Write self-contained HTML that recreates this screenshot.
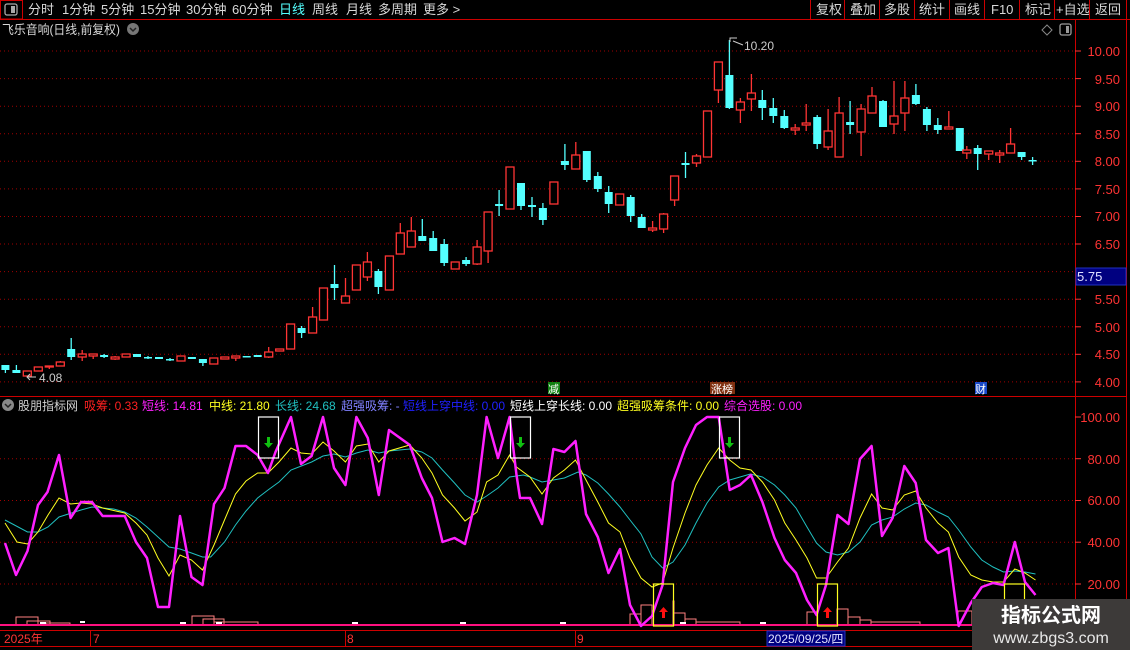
<!DOCTYPE html>
<html><head><meta charset="utf-8"><style>
html,body{margin:0;padding:0;background:#000;}
body{width:1130px;height:650px;overflow:hidden;position:relative;font-family:"Liberation Sans","Noto Sans CJK SC",sans-serif;}
svg{position:absolute;left:0;top:0}
.r{fill:#000;stroke:#ff3434;stroke-width:1.3}
.rl{stroke:#ff3434;stroke-width:1.3}
.c{fill:#54ffff}
.cl{stroke:#54ffff;stroke-width:1.3}
.g{stroke:#a00000;stroke-dasharray:1 3;stroke-width:1}
.ax{fill:#ff3434;font-size:13px;text-anchor:end}
.tb{fill:#d8d8d8;font-size:13px}
</style></head><body>
<svg width="1130" height="650" viewBox="0 0 1130 650" font-family="Liberation Sans, Noto Sans CJK SC, sans-serif">
<rect x="0.5" y="0.5" width="22" height="18.5" fill="none" stroke="#c00" />
<rect x="5" y="4" width="12" height="11" rx="2" fill="none" stroke="#aaa" stroke-width="1.3"/>
<rect x="11" y="6" width="4" height="7" fill="#aaa"/>
<line x1="0" y1="19.5" x2="1130" y2="19.5" stroke="#c00"/>
<g class="tb">
<text x="28" y="14">分时</text><text x="62" y="14">1分钟</text><text x="101" y="14">5分钟</text><text x="140" y="14">15分钟</text><text x="186" y="14">30分钟</text><text x="232" y="14">60分钟</text>
<text x="279" y="14" fill="#54ffff">日线</text><text x="312" y="14">周线</text><text x="346" y="14">月线</text><text x="378" y="14">多周期</text><text x="423" y="14">更多 &gt;</text>
</g>
<g stroke="#c00" fill="none">
<line x1="810.5" y1="0" x2="810.5" y2="19"/><line x1="844.5" y1="0" x2="844.5" y2="19"/><line x1="879.5" y1="0" x2="879.5" y2="19"/><line x1="914.5" y1="0" x2="914.5" y2="19"/><line x1="949.5" y1="0" x2="949.5" y2="19"/><line x1="984.5" y1="0" x2="984.5" y2="19"/><line x1="1019.5" y1="0" x2="1019.5" y2="19"/><line x1="1054.5" y1="0" x2="1054.5" y2="19"/><line x1="1089.5" y1="0" x2="1089.5" y2="19"/><line x1="1126.5" y1="0" x2="1126.5" y2="650"/>
</g>
<g class="tb">
<text x="816" y="14">复权</text><text x="850" y="14">叠加</text><text x="884" y="14">多股</text><text x="919" y="14">统计</text><text x="954" y="14">画线</text><text x="991" y="14">F10</text><text x="1025" y="14">标记</text><text x="1056" y="14">+自选</text><text x="1095" y="14">返回</text>
</g>
<text x="2" y="34" fill="#d8d8d8" font-size="12.5" textLength="118" lengthAdjust="spacingAndGlyphs">飞乐音响(日线,前复权)</text>
<circle cx="133" cy="29" r="6" fill="#777"/><path d="M130 28 L133 31 L136 28" stroke="#222" stroke-width="1.5" fill="none"/>
<path d="M1047 25 L1052 30 L1047 35 L1042 30 Z" fill="none" stroke="#888"/>
<rect x="1060" y="24" width="11" height="11" rx="2" fill="none" stroke="#999" stroke-width="1.3"/><rect x="1066" y="26" width="3" height="7" fill="#999"/>
<line x1="1075.5" y1="19" x2="1075.5" y2="630" stroke="#c00"/>
<line x1="0" y1="396.5" x2="1126" y2="396.5" stroke="#c00"/>
<line x1="0" y1="630.5" x2="1130" y2="630.5" stroke="#c00"/>
<line x1="0" y1="646.5" x2="1130" y2="646.5" stroke="#c00"/>
<g class="g">
<line x1="0" y1="51" x2="1073" y2="51"/><line x1="0" y1="78.6" x2="1073" y2="78.6"/><line x1="0" y1="106.2" x2="1073" y2="106.2"/><line x1="0" y1="133.7" x2="1073" y2="133.7"/><line x1="0" y1="161.3" x2="1073" y2="161.3"/><line x1="0" y1="188.9" x2="1073" y2="188.9"/><line x1="0" y1="216.5" x2="1073" y2="216.5"/><line x1="0" y1="244" x2="1073" y2="244"/><line x1="0" y1="271.6" x2="1073" y2="271.6"/><line x1="0" y1="299.2" x2="1073" y2="299.2"/><line x1="0" y1="326.8" x2="1073" y2="326.8"/><line x1="0" y1="354.3" x2="1073" y2="354.3"/><line x1="0" y1="381.9" x2="1073" y2="381.9"/>
<line x1="0" y1="458.7" x2="1073" y2="458.7"/><line x1="0" y1="500.5" x2="1073" y2="500.5"/><line x1="0" y1="542.2" x2="1073" y2="542.2"/><line x1="0" y1="584" x2="1073" y2="584"/>
</g>
<g stroke="#ff3434">
<line x1="1075" y1="51" x2="1081" y2="51"/><line x1="1075" y1="78.6" x2="1081" y2="78.6"/><line x1="1075" y1="106.2" x2="1081" y2="106.2"/><line x1="1075" y1="133.7" x2="1081" y2="133.7"/><line x1="1075" y1="161.3" x2="1081" y2="161.3"/><line x1="1075" y1="188.9" x2="1081" y2="188.9"/><line x1="1075" y1="216.5" x2="1081" y2="216.5"/><line x1="1075" y1="244" x2="1081" y2="244"/><line x1="1075" y1="299.2" x2="1081" y2="299.2"/><line x1="1075" y1="326.8" x2="1081" y2="326.8"/><line x1="1075" y1="354.3" x2="1081" y2="354.3"/><line x1="1075" y1="381.9" x2="1081" y2="381.9"/>
<line x1="1075" y1="417" x2="1081" y2="417"/><line x1="1075" y1="458.7" x2="1081" y2="458.7"/><line x1="1075" y1="500.5" x2="1081" y2="500.5"/><line x1="1075" y1="542.2" x2="1081" y2="542.2"/><line x1="1075" y1="584" x2="1081" y2="584"/>
</g>
<g class="ax">
<text x="1120" y="56">10.00</text><text x="1120" y="84">9.50</text><text x="1120" y="111">9.00</text><text x="1120" y="139">8.50</text><text x="1120" y="166">8.00</text><text x="1120" y="194">7.50</text><text x="1120" y="221">7.00</text><text x="1120" y="249">6.50</text><text x="1120" y="304">5.50</text><text x="1120" y="332">5.00</text><text x="1120" y="359">4.50</text><text x="1120" y="387">4.00</text>
<text x="1120" y="422">100.00</text><text x="1120" y="464">80.00</text><text x="1120" y="505">60.00</text><text x="1120" y="547">40.00</text><text x="1120" y="589">20.00</text>
</g>
<rect x="1076" y="268" width="50" height="17" fill="#000080" stroke="#2030c0"/>
<text x="1077" y="281" fill="#e0e0ff" font-size="13">5.75</text>
<g id="cd">
<line class="cl" x1="5.4" y1="365" x2="5.4" y2="373"/><rect class="c" x="1.4" y="365" width="8" height="5"/>
<line class="cl" x1="16.4" y1="365" x2="16.4" y2="373"/><rect class="c" x="12.4" y="370" width="8" height="3"/>
<rect class="r" x="23.3" y="371" width="8" height="5"/>
<rect class="r" x="34.3" y="367" width="8" height="4"/>
<line class="rl" x1="49.3" y1="366" x2="49.3" y2="369"/><rect class="r" x="45.3" y="366" width="8" height="1"/>
<line class="rl" x1="60.3" y1="361" x2="60.3" y2="366"/><rect class="r" x="56.3" y="362" width="8" height="4"/>
<line class="cl" x1="71.2" y1="338" x2="71.2" y2="360"/><rect class="c" x="67.2" y="349" width="8" height="8"/>
<line class="rl" x1="82.2" y1="350" x2="82.2" y2="361"/><rect class="r" x="78.2" y="354" width="8" height="3"/>
<line class="rl" x1="93.2" y1="354" x2="93.2" y2="359"/><rect class="r" x="89.2" y="354" width="8" height="2"/>
<line class="cl" x1="104.1" y1="354" x2="104.1" y2="358"/><rect class="c" x="100.1" y="355" width="8" height="2"/>
<line class="rl" x1="115.1" y1="356" x2="115.1" y2="360"/><rect class="r" x="111.1" y="357" width="8" height="2"/>
<rect class="r" x="122.1" y="354" width="8" height="3"/>
<rect class="c" x="133" y="354" width="8" height="3"/>
<line class="cl" x1="148" y1="356" x2="148" y2="359"/><rect class="c" x="144" y="357" width="8" height="1.5"/>
<rect class="c" x="155" y="357" width="8" height="2"/>
<line class="cl" x1="170" y1="358" x2="170" y2="361"/><rect class="c" x="166" y="359" width="8" height="1.5"/>
<rect class="r" x="177" y="356" width="8" height="5"/>
<rect class="c" x="187.9" y="357" width="8" height="2"/>
<line class="cl" x1="202.9" y1="359" x2="202.9" y2="366"/><rect class="c" x="198.9" y="359" width="8" height="4"/>
<rect class="r" x="209.8" y="358" width="8" height="6"/>
<rect class="r" x="220.8" y="357" width="8" height="2"/>
<line class="rl" x1="235.8" y1="356" x2="235.8" y2="361"/><rect class="r" x="231.8" y="356" width="8" height="2"/>
<rect class="c" x="242.7" y="356" width="8" height="1.5"/>
<rect class="c" x="253.7" y="355" width="8" height="2"/>
<line class="rl" x1="268.7" y1="347" x2="268.7" y2="358"/><rect class="r" x="264.7" y="352" width="8" height="5"/>
<rect class="r" x="275.7" y="349" width="8" height="2"/>
<rect class="r" x="286.6" y="324" width="8" height="25"/>
<line class="cl" x1="301.6" y1="326" x2="301.6" y2="338"/><rect class="c" x="297.6" y="328" width="8" height="5"/>
<line class="rl" x1="312.6" y1="307" x2="312.6" y2="333"/><rect class="r" x="308.6" y="317" width="8" height="16"/>
<rect class="r" x="319.5" y="288" width="8" height="32"/>
<line class="cl" x1="334.5" y1="265" x2="334.5" y2="300"/><rect class="c" x="330.5" y="284" width="8" height="4"/>
<line class="rl" x1="345.5" y1="278" x2="345.5" y2="303"/><rect class="r" x="341.5" y="296" width="8" height="7"/>
<rect class="r" x="352.4" y="265" width="8" height="25"/>
<line class="rl" x1="367.4" y1="252" x2="367.4" y2="281"/><rect class="r" x="363.4" y="262" width="8" height="15"/>
<line class="cl" x1="378.4" y1="269" x2="378.4" y2="294"/><rect class="c" x="374.4" y="271" width="8" height="16"/>
<rect class="r" x="385.4" y="256" width="8" height="34"/>
<line class="rl" x1="400.3" y1="223" x2="400.3" y2="254"/><rect class="r" x="396.3" y="233" width="8" height="21"/>
<line class="rl" x1="411.3" y1="217" x2="411.3" y2="247"/><rect class="r" x="407.3" y="231" width="8" height="16"/>
<line class="cl" x1="422.3" y1="219" x2="422.3" y2="241"/><rect class="c" x="418.3" y="236" width="8" height="5"/>
<line class="cl" x1="433.2" y1="231" x2="433.2" y2="251"/><rect class="c" x="429.2" y="238" width="8" height="13"/>
<line class="cl" x1="444.2" y1="239" x2="444.2" y2="266"/><rect class="c" x="440.2" y="244" width="8" height="19"/>
<rect class="r" x="451.2" y="262" width="8" height="7"/>
<line class="cl" x1="466.1" y1="257" x2="466.1" y2="266"/><rect class="c" x="462.1" y="260" width="8" height="4"/>
<line class="rl" x1="477.1" y1="240" x2="477.1" y2="265"/><rect class="r" x="473.1" y="247" width="8" height="17"/>
<line class="rl" x1="488.1" y1="212" x2="488.1" y2="263"/><rect class="r" x="484.1" y="212" width="8" height="39"/>
<line class="cl" x1="499.1" y1="190" x2="499.1" y2="216"/><rect class="c" x="495.1" y="204" width="8" height="2"/>
<rect class="r" x="506" y="167" width="8" height="42"/>
<line class="cl" x1="521" y1="183" x2="521" y2="210"/><rect class="c" x="517" y="183" width="8" height="23"/>
<line class="cl" x1="532" y1="197" x2="532" y2="217"/><rect class="c" x="528" y="205" width="8" height="2"/>
<line class="cl" x1="542.9" y1="203" x2="542.9" y2="225"/><rect class="c" x="538.9" y="208" width="8" height="12"/>
<rect class="r" x="549.9" y="182" width="8" height="22"/>
<line class="cl" x1="564.9" y1="144" x2="564.9" y2="170"/><rect class="c" x="560.9" y="161" width="8" height="4"/>
<line class="rl" x1="575.8" y1="142" x2="575.8" y2="169"/><rect class="r" x="571.8" y="155" width="8" height="14"/>
<line class="cl" x1="586.8" y1="151" x2="586.8" y2="182"/><rect class="c" x="582.8" y="151" width="8" height="29"/>
<line class="cl" x1="597.8" y1="172" x2="597.8" y2="192"/><rect class="c" x="593.8" y="176" width="8" height="13"/>
<line class="cl" x1="608.7" y1="186" x2="608.7" y2="213"/><rect class="c" x="604.7" y="192" width="8" height="12"/>
<rect class="r" x="615.7" y="194" width="8" height="11"/>
<line class="cl" x1="630.7" y1="195" x2="630.7" y2="222"/><rect class="c" x="626.7" y="197" width="8" height="19"/>
<line class="cl" x1="641.7" y1="214" x2="641.7" y2="228"/><rect class="c" x="637.7" y="217" width="8" height="11"/>
<line class="rl" x1="652.6" y1="221" x2="652.6" y2="232"/><rect class="r" x="648.6" y="228" width="8" height="2"/>
<line class="rl" x1="663.6" y1="213" x2="663.6" y2="233"/><rect class="r" x="659.6" y="214" width="8" height="15"/>
<line class="rl" x1="674.6" y1="176" x2="674.6" y2="206"/><rect class="r" x="670.6" y="176" width="8" height="24"/>
<line class="cl" x1="685.5" y1="152" x2="685.5" y2="178"/><rect class="c" x="681.5" y="163" width="8" height="2"/>
<line class="rl" x1="696.5" y1="154" x2="696.5" y2="167"/><rect class="r" x="692.5" y="156" width="8" height="7"/>
<rect class="r" x="703.5" y="111" width="8" height="46"/>
<line class="rl" x1="718.4" y1="62" x2="718.4" y2="103"/><rect class="r" x="714.4" y="62" width="8" height="28"/>
<line class="cl" x1="729.4" y1="40" x2="729.4" y2="109"/><rect class="c" x="725.4" y="75" width="8" height="33"/>
<line class="rl" x1="740.4" y1="98" x2="740.4" y2="123"/><rect class="r" x="736.4" y="102" width="8" height="8"/>
<line class="rl" x1="751.4" y1="74" x2="751.4" y2="111"/><rect class="r" x="747.4" y="93" width="8" height="6"/>
<line class="cl" x1="762.3" y1="90" x2="762.3" y2="120"/><rect class="c" x="758.3" y="100" width="8" height="8"/>
<line class="cl" x1="773.3" y1="98" x2="773.3" y2="123"/><rect class="c" x="769.3" y="108" width="8" height="8"/>
<line class="cl" x1="784.3" y1="110" x2="784.3" y2="129"/><rect class="c" x="780.3" y="116" width="8" height="12"/>
<line class="rl" x1="795.2" y1="124" x2="795.2" y2="135"/><rect class="r" x="791.2" y="128" width="8" height="2"/>
<line class="rl" x1="806.2" y1="104" x2="806.2" y2="131"/><rect class="r" x="802.2" y="123" width="8" height="2"/>
<line class="cl" x1="817.2" y1="115" x2="817.2" y2="149"/><rect class="c" x="813.2" y="117" width="8" height="27"/>
<line class="rl" x1="828.1" y1="109" x2="828.1" y2="150"/><rect class="r" x="824.1" y="131" width="8" height="16"/>
<line class="rl" x1="839.1" y1="97" x2="839.1" y2="157"/><rect class="r" x="835.1" y="113" width="8" height="44"/>
<line class="cl" x1="850.1" y1="101" x2="850.1" y2="134"/><rect class="c" x="846.1" y="122" width="8" height="3"/>
<line class="rl" x1="861.1" y1="104" x2="861.1" y2="156"/><rect class="r" x="857.1" y="109" width="8" height="23"/>
<line class="rl" x1="872" y1="87" x2="872" y2="113"/><rect class="r" x="868" y="96" width="8" height="17"/>
<line class="cl" x1="883" y1="100" x2="883" y2="127"/><rect class="c" x="879" y="101" width="8" height="26"/>
<line class="rl" x1="894" y1="81" x2="894" y2="134"/><rect class="r" x="890" y="116" width="8" height="8"/>
<line class="rl" x1="904.9" y1="81" x2="904.9" y2="131"/><rect class="r" x="900.9" y="98" width="8" height="15"/>
<line class="cl" x1="915.9" y1="84" x2="915.9" y2="105"/><rect class="c" x="911.9" y="95" width="8" height="9"/>
<line class="cl" x1="926.9" y1="107" x2="926.9" y2="131"/><rect class="c" x="922.9" y="109" width="8" height="16"/>
<line class="cl" x1="937.8" y1="118" x2="937.8" y2="134"/><rect class="c" x="933.8" y="125" width="8" height="5"/>
<line class="rl" x1="948.8" y1="111" x2="948.8" y2="129"/><rect class="r" x="944.8" y="127" width="8" height="2"/>
<rect class="c" x="955.8" y="128" width="8" height="23"/>
<line class="rl" x1="966.8" y1="146" x2="966.8" y2="159"/><rect class="r" x="962.8" y="150" width="8" height="3"/>
<line class="cl" x1="977.7" y1="145" x2="977.7" y2="170"/><rect class="c" x="973.7" y="148" width="8" height="6"/>
<line class="rl" x1="988.7" y1="151" x2="988.7" y2="160"/><rect class="r" x="984.7" y="151" width="8" height="3"/>
<line class="rl" x1="999.7" y1="150" x2="999.7" y2="163"/><rect class="r" x="995.7" y="153" width="8" height="2"/>
<line class="rl" x1="1010.6" y1="128" x2="1010.6" y2="153"/><rect class="r" x="1006.6" y="144" width="8" height="9"/>
<line class="cl" x1="1021.6" y1="152" x2="1021.6" y2="160"/><rect class="c" x="1017.6" y="152" width="8" height="5"/>
<line class="cl" x1="1032.6" y1="157" x2="1032.6" y2="165"/><rect class="c" x="1028.6" y="160" width="8" height="1.5"/>
</g>
<path d="M730 42 L730 38 L737 38 M733 41 L743 45" stroke="#ccc" fill="none"/>
<text x="744" y="50" fill="#ccc" font-size="12">10.20</text>
<path d="M36 377 L27 377 M30 374 L27 377 L30 380" stroke="#ccc" fill="none"/>
<text x="39" y="382" fill="#ccc" font-size="12">4.08</text>
<rect x="548" y="382" width="12" height="12" fill="#108010"/><text x="548" y="393" fill="#fff" font-size="11">减</text>
<rect x="710" y="382" width="25" height="12" fill="#803010"/><text x="711" y="393" fill="#fff" font-size="11">涨榜</text>
<rect x="975" y="382" width="12" height="12" fill="#1848c8"/><text x="975" y="393" fill="#fff" font-size="11">财</text>
<circle cx="8" cy="405" r="6" fill="#888"/><path d="M5 404 L8 407 L11 404" stroke="#222" stroke-width="1.5" fill="none"/>
<g font-size="12">
<text x="18" y="410" fill="#d0d0d0">股朋指标网</text>
<text x="84" y="410" fill="#ff2020">吸筹: 0.33</text>
<text x="142" y="410" fill="#ff20ff">短线: 14.81</text>
<text x="209" y="410" fill="#ffff20">中线: 21.80</text>
<text x="275" y="410" fill="#20c0c0">长线: 24.68</text>
<text x="341" y="410" fill="#8080ff">超强吸筹: -</text>
<text x="403" y="410" fill="#2020ff">短线上穿中线: 0.00</text>
<text x="510" y="410" fill="#ffffff">短线上穿长线: 0.00</text>
<text x="617" y="410" fill="#ffff20">超强吸筹条件: 0.00</text>
<text x="724" y="410" fill="#ff20ff">综合选股: 0.00</text>
</g>
<g fill="none" stroke="#ff8080" stroke-width="1">
<path d="M16 625 V617 H38 V625 M27 625 V621 H50 V625 M46 625 V623 H70 V625"/>
<path d="M192 625 V616 H214 V625 M203 625 V619 H224 V625 M214 625 V622 H258 V625"/>
<path d="M630 625 V614 H641 V625 M641 625 V605 H652 V625 M673 625 V601 H674 V625 M673 625 V613 H685 V625 M685 625 V619 H696 V625 M696 625 V622 H740 V625"/>
<path d="M807 625 V612 H817 V625 M837 625 V609 H848 V625 M848 625 V617 H860 V625 M860 625 V620 H871 V625 M871 625 V622 H920 V625"/>
<path d="M958 625 V611 H972 V625"/>
</g>
<g fill="#fff"><rect x="40" y="622" width="6" height="2"/><rect x="80" y="621" width="5" height="2"/><rect x="180" y="622" width="6" height="2"/><rect x="216" y="622" width="6" height="2"/><rect x="352" y="622" width="6" height="2"/><rect x="460" y="622" width="6" height="2"/><rect x="560" y="622" width="6" height="2"/><rect x="680" y="622" width="6" height="2"/><rect x="760" y="622" width="6" height="2"/></g>
<line x1="0" y1="625" x2="1073" y2="625" stroke="#ff1080" stroke-width="2"/>
<polyline fill="none" stroke="#20c0c0" stroke-width="1" points="5,520 27.5,532 38,532 48,527 59,517 81,510 92,507 113.6,509 124.7,512 136,518 147,527 158,537 169,547 180,549 191.5,553 202.5,557 210.7,557 224.5,542 235.5,525 246,511 257.6,498 268,490 279,482 291,470 311.6,462 323,456 334,454 345.4,457 356.4,453 367.8,450 378.8,453 389,451 409.8,449 421.8,452 432,458 442.5,470 454.5,483 465,495 477,502 486.6,496 498,488 509.6,477 523.4,475 530,477 542,482 553.4,480 564.4,478 578,472 586,475 597.8,483 608.5,494 620,507 630,520 641,534 652,557 662.6,568 673,562 685,545 696,523 707,503 718.7,487 729.7,480 750.4,474 762.4,477 774.5,485 784.8,495 796,508 807,527 816.5,543 826,552 837.5,555 848.5,552 860,542 871.6,525 882,520 892.6,517 904.3,509 915.7,503 926,505 938,512 948.4,517 958.7,530 970.8,547 981.8,560 993,567 1003.5,572 1014.8,571 1025,572 1035.5,574"/>
<polyline fill="none" stroke="#ffff20" stroke-width="1" points="5,523 17,542 27.5,544 38,532 48,515 59,498 70.6,504 81,503 92,504 102.6,508 124.7,513 136,523 147,535 158,558 169,576 180,555 191.5,560 202.5,570 214,545 224.5,520 235.5,494 246,481 257.6,473 268,473 279,462 291,448 301,453 311.6,454 323,442 334,451 345.4,462 356.4,446 367.8,444 378.8,462 389,451 409.8,445 421.8,458 432,473 442.5,495 454.5,508 465,521 477,512 486.6,482 498,475 509.6,455 516.5,467 530,477 542,494 553.4,478 564.4,470 575.5,460 586,480 597.8,502 608.5,523 620,532 630,558 641,578 652,587 662.6,583 673,548 685,513 696,485 707,465 718.7,448 729.7,460 740,468 751,470 762.4,482 774.5,500 784.8,523 796,540 807,558 816.5,578 826,578 837.5,562 848.5,548 860,518 871.6,494 882,508 892.6,510 904.3,495 915.7,491 926,508 938,523 948.4,532 958.7,557 970.8,575 981.8,580 993,582 1003.5,582 1014.8,569 1025,573 1035.5,580"/>
<polyline fill="none" stroke="#ff20ff" stroke-width="2.5" stroke-linejoin="round" points="5,543 16,575 27.5,551 38,505 47.5,492 59,455 70.6,518 81,502 92,502 102.6,516 124.7,516 136,542 147,558 158,607 169,607 180,516 191.5,577 202.5,585 214,504 224.5,488 235.5,446 246,446 257.6,455 268,473 275.5,452 291,417 301,464 311.6,456 323,417 334,468 345.4,485 356.4,417 367.8,438 378.8,495 389,430 409.8,445 421.8,478 432,498 442.5,542 454.5,538 465,544 477,495 486.6,417 498,458 509.6,417 516.5,475 520,498 530,498 542,524 553.4,449 564.4,452 575.5,441 586,514 597.8,537 608.5,573 620,549 630,605 641,626 652,616 662.6,585 673,482 685,448 696,425 707,417 718.7,417 729.7,490 740,485 751,475 762.4,502 774.5,538 784.8,560 796,573 807,600 816.5,615 826,585 837.5,515 848.5,524 860,459 871.6,446 882,536 892.6,518 904.3,466 915.7,483 926,540 938,553 948.4,548 958.7,626 970.8,603 981.8,587 993,583 1003.5,585 1014.8,542 1025,582 1035.5,595"/>
<g fill="none" stroke="#fff" stroke-width="1.2">
<rect x="258.5" y="417" width="20" height="41"/><rect x="510.5" y="417" width="20" height="41"/><rect x="719.5" y="417" width="20" height="41"/>
</g>
<g fill="#10c010">
<path d="M267 437 h3 v6 h3 l-4.5 5 l-4.5 -5 h3 z"/><path d="M519 437 h3 v6 h3 l-4.5 5 l-4.5 -5 h3 z"/><path d="M728 437 h3 v6 h3 l-4.5 5 l-4.5 -5 h3 z"/>
</g>
<g fill="none" stroke="#ffff20" stroke-width="1.2">
<rect x="653.5" y="584" width="20" height="42"/><rect x="817.5" y="584" width="20" height="42"/><rect x="1004.5" y="584" width="20" height="42"/>
</g>
<g fill="#ff1010">
<path d="M662 618 h3 v-6 h3 l-4.5 -5 l-4.5 5 h3 z"/><path d="M826 618 h3 v-6 h3 l-4.5 -5 l-4.5 5 h3 z"/>
</g>
<g stroke="#c00"><line x1="90.5" y1="630" x2="90.5" y2="646"/><line x1="345.5" y1="630" x2="345.5" y2="646"/><line x1="575.5" y1="630" x2="575.5" y2="646"/></g>
<g fill="#ff3434" font-size="12"><text x="4" y="643">2025年</text><text x="93" y="643">7</text><text x="347" y="643">8</text><text x="577" y="643">9</text></g>
<rect x="767" y="631" width="78" height="15" fill="#000080" stroke="#2030c0"/>
<text x="768" y="643" fill="#e0e0ff" font-size="12">2025/09/25/四</text>
<rect x="972" y="599" width="158" height="51" fill="#3d3a39"/>
<text x="1051" y="622" fill="#fff" font-size="20" font-weight="bold" text-anchor="middle">指标公式网</text>
<text x="1051" y="643" fill="#e8e8e8" font-size="16" text-anchor="middle">www.zbgs3.com</text>
</svg>
</body></html>
